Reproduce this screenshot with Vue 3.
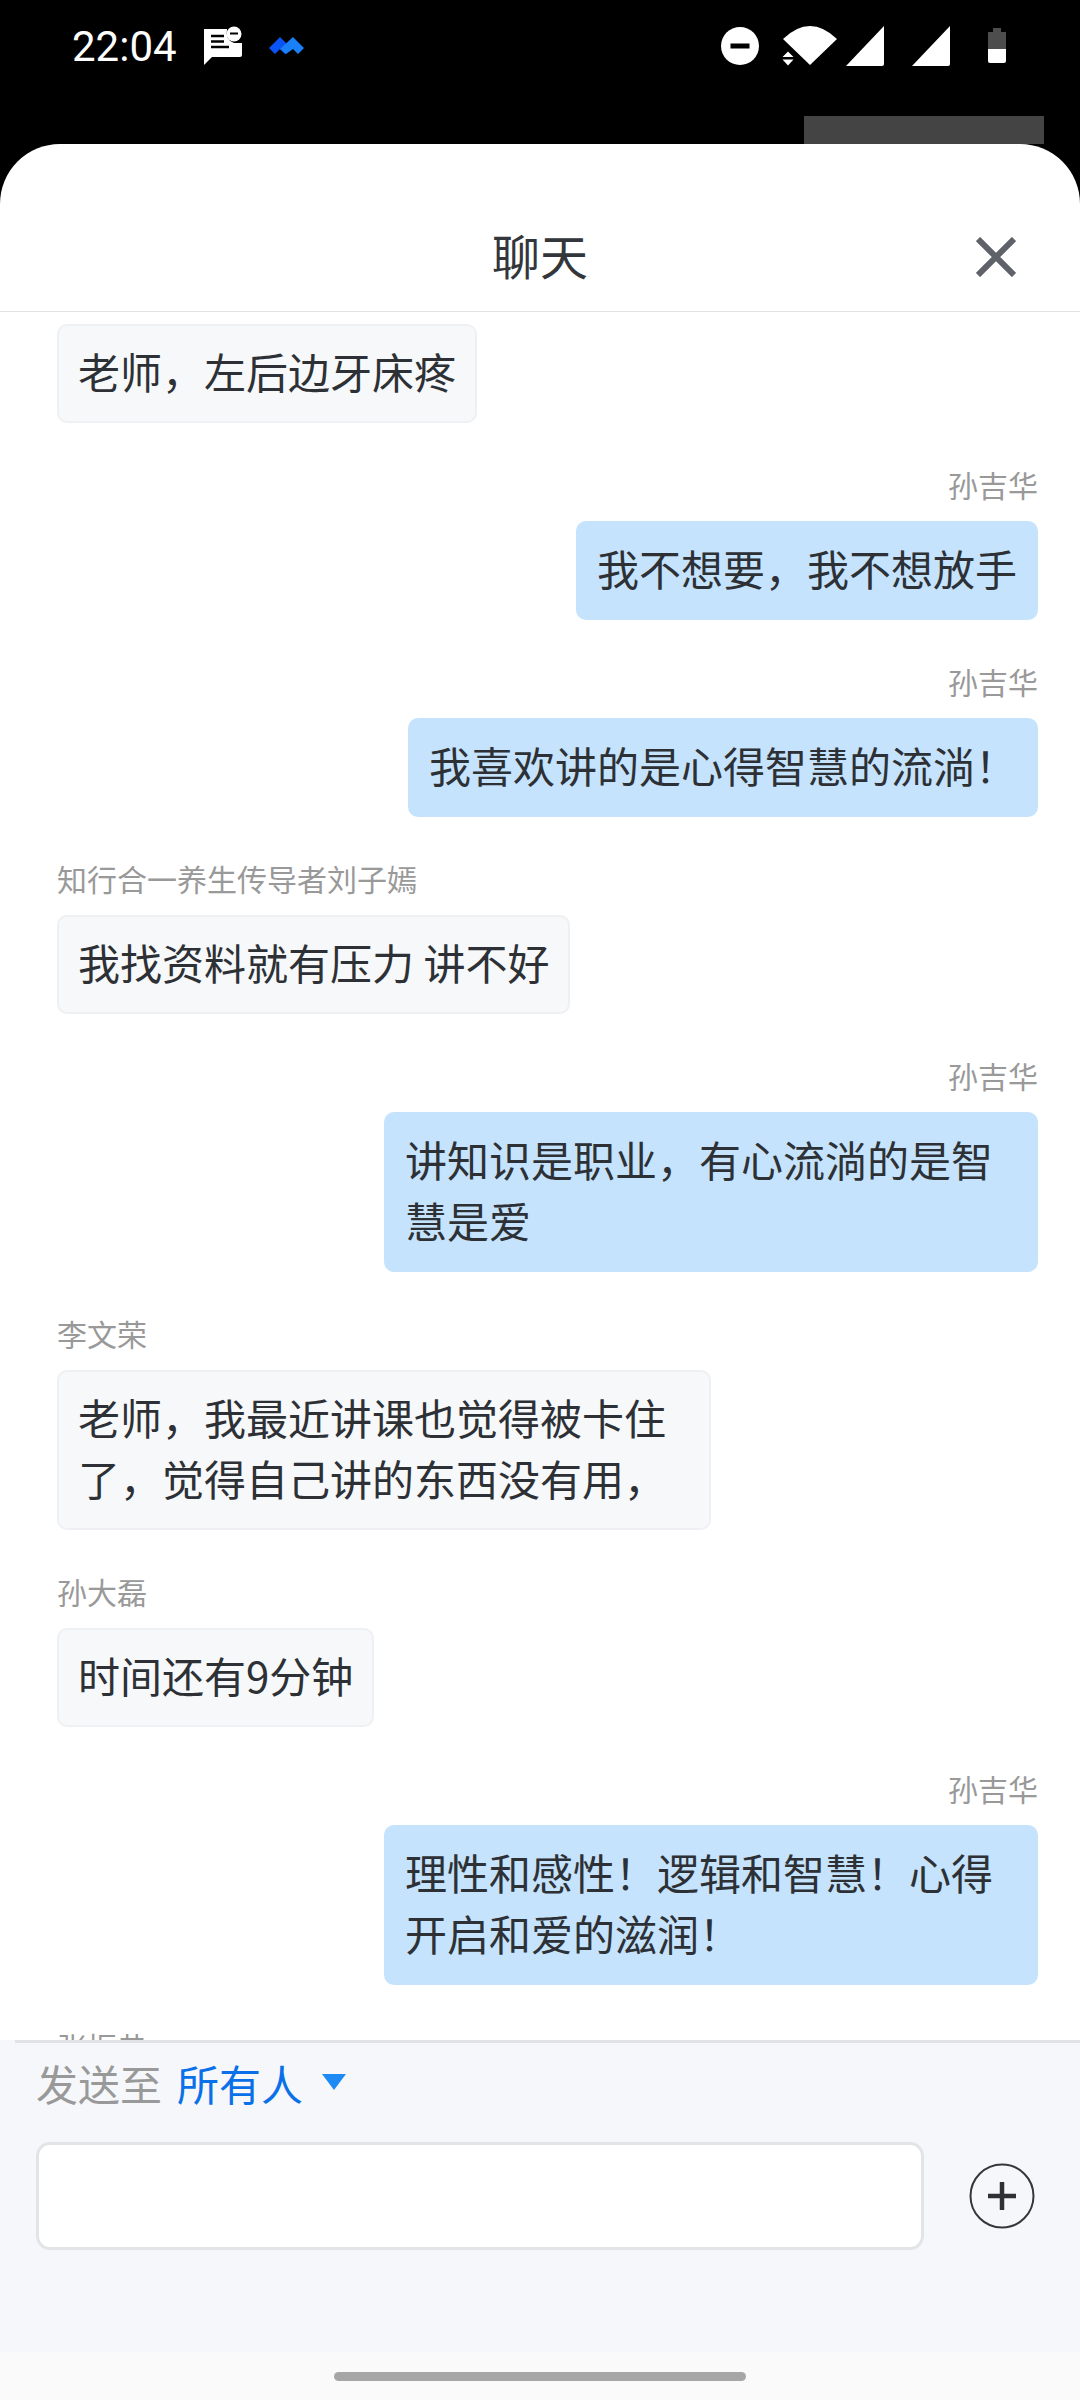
<script setup>
const messages = [
  { id: 1, side: 'left', text: '老师，左后边牙床疼' },
  { id: 2, side: 'right', name: '孙吉华', text: '我不想要，我不想放手' },
  { id: 3, side: 'right', name: '孙吉华', text: '我喜欢讲的是心得智慧的流淌！' },
  { id: 4, side: 'left', name: '知行合一养生传导者刘子嫣', text: '我找资料就有压力 讲不好' },
  { id: 5, side: 'right', name: '孙吉华', text: '讲知识是职业，有心流淌的是智慧是爱' },
  { id: 6, side: 'left', name: '李文荣', text: '老师，我最近讲课也觉得被卡住了，觉得自己讲的东西没有用，' },
  { id: 7, side: 'left', name: '孙大磊', text: '时间还有9分钟' },
  { id: 8, side: 'right', name: '孙吉华', text: '理性和感性！逻辑和智慧！心得开启和爱的滋润！' },
  { id: 9, side: 'left', name: '张振恭', text: '' }
]
</script>

<template>
  <div class="screen">
    <div class="status">
      <div class="status-left">
        <span class="time">22:04</span>
        <svg class="ic-msg" width="40" height="40" viewBox="0 0 40 40">
          <path fill="#fff" d="M1 3H24Q22 14 31 17H39V29Q39 31 37 31H9L1 39Z" />
          <path stroke="#000" stroke-width="2.400" d="M8 10H21M8 15.500H21M8 21H26" />
          <circle cx="31" cy="8" r="7.500" fill="#fff" />
          <path stroke="#000" stroke-width="2" d="M27 7.500H35" />
        </svg>
        <svg class="ic-app" width="35" height="18" viewBox="0 0 35 18">
          <path fill="#0a54f5" d="M0 11L11 0L22 11L16 17L11 12L6 17Z" />
          <path fill="#1a80f8" d="M11 12L24 0L35 11L29 17L24 12L17 17Z" />
        </svg>
      </div>
      <div class="status-right">
        <svg width="38" height="38" viewBox="0 0 38 38"><circle cx="19" cy="19" r="19" fill="#fff" /><rect x="9.500" y="16.500" width="19" height="5" fill="#000" /></svg>
        <svg class="ic-wifi" width="55" height="40" viewBox="0 0 55 40">
          <path fill="#fff" d="M1 13Q28 -13 55 13L28 39Z" />
          <path fill="#fff" d="M0.500 31L6 25.500L11.500 31ZM0.500 33.500H11.500L6 39.500Z" />
        </svg>
        <svg class="ic-sig" width="40" height="41" viewBox="0 0 40 41"><path fill="#fff" d="M39 0V38Q39 40 37 40H1Z" /></svg>
        <svg class="ic-sig2" width="40" height="41" viewBox="0 0 40 41"><path fill="#fff" d="M39 0V38Q39 40 37 40H1Z" /></svg>
        <svg class="ic-bat" width="20" height="36" viewBox="0 0 20 36">
          <path fill="#4d4d4d" d="M6 0H14V4H19V21H1V4H6Z" />
          <path fill="#fff" d="M1 21H19V33Q19 35 17 35H3Q1 35 1 33Z" />
        </svg>
      </div>
    </div>
    <div class="behind-row"><div class="behind"></div></div>

    <div class="sheet">
      <header class="head">
        <span class="title">聊天</span>
        <svg class="close" width="40" height="40" viewBox="0 0 40 40"><path d="M2 2L38 38M38 2L2 38" stroke="#5f6269" stroke-width="6" /></svg>
      </header>

      <div class="list">
        <div v-for="m in messages" :key="m.id" class="msg" :class="m.side">
          <div v-if="m.name" class="name">{{ m.name }}</div>
          <div v-if="m.text" class="bubble">{{ m.text }}</div>
        </div>
      </div>

      <footer class="composer">
        <div class="to">
          <span class="to-label">发送至</span>
          <span class="to-value">所有人</span>
          <span class="caret"></span>
        </div>
        <div class="input-row">
          <div class="input"></div>
          <svg class="plus" width="66" height="66" viewBox="0 0 66 66">
            <circle cx="33" cy="33" r="31.500" fill="none" stroke="#33363b" stroke-width="2" />
            <path d="M19 33H47M33 19V47" stroke="#2d3034" stroke-width="4.500" />
          </svg>
        </div>
      </footer>
      <div class="navbar"><span class="pill"></span></div>
    </div>
  </div>
</template>

<style>
html, body { margin: 0; background: #000; }
</style>

<style scoped>
.screen {
  width: 1080px;
  height: 2400px;
  background: #000;
  display: flex;
  flex-direction: column;
  overflow: hidden;
  font-family: "Noto Sans CJK SC", "Noto Sans", sans-serif;
}
.status {
  height: 92px;
  flex: none;
  padding: 0 73px 0 72px;
  display: flex;
  align-items: center;
  justify-content: space-between;
  box-sizing: border-box;
}
.status-left, .status-right { display: flex; align-items: center; }
.time { font-family: Roboto, sans-serif; font-size: 42px; color: #fff; }
.ic-msg { margin-left: 26px; }
.ic-app { margin-left: 26px; }
.ic-wifi { margin-left: 23px; }
.ic-sig { margin-left: 8px; }
.ic-sig2 { margin-left: 26px; }
.ic-bat { margin-left: 36px; }
.behind-row { height: 52px; flex: none; display: flex; justify-content: flex-end; padding-right: 36px; align-items: flex-end; }
.behind { width: 240px; height: 28px; background: #444; }
.sheet {
  flex: 1;
  min-height: 0;
  background: #fff;
  border-radius: 60px 60px 0 0;
  display: flex;
  flex-direction: column;
  overflow: hidden;
}
.head {
  height: 168px;
  flex: none;
  box-sizing: border-box;
  border-bottom: 1px solid #e2e2e2;
  position: relative;
  display: flex;
  align-items: center;
  justify-content: center;
  padding-top: 52px;
}
.title { font-size: 48px; color: #33363b; }
.close { position: absolute; right: 64px; top: 93px; }
.list {
  flex: 1;
  min-height: 0;
  overflow: hidden;
  padding: 12px 42px 0 57px;
  display: flex;
  flex-direction: column;
  gap: 41px;
}
.msg { display: flex; flex-direction: column; flex: none; }
.msg.right { align-items: flex-end; }
.msg.left { align-items: flex-start; }
.name { font-size: 30px; line-height: 40px; color: #999; margin-bottom: 17px; }
.bubble {
  box-sizing: border-box;
  font-size: 42px;
  line-height: 61px;
  color: #2d3136;
  padding: 14px 19px 20px;
  border-radius: 10px;
  border: 2px solid #c5e3fc;
  max-width: 654px;
}
.left .bubble { background: #f7f8fa; border-color: #eff0f3; }
.right .bubble { background: #c5e3fc; }
.composer {
  height: 312px;
  flex: none;
  box-sizing: border-box;
  background: #f5f7fb;
  position: relative;
  padding: 3px 36px 0;
}
.composer::before {
  content: "";
  position: absolute;
  left: 15px; right: 0; top: 0;
  height: 3px;
  background: #e0e2e7;
}
.to { display: flex; align-items: center; height: 78px; font-size: 42px; }
.to-label { color: #999; }
.to-value { color: #0a70e8; margin-left: 15px; }
.caret {
  width: 0; height: 0;
  margin-left: 19px;
  border-left: 12px solid transparent;
  border-right: 12px solid transparent;
  border-top: 16px solid #1e8bf5;
}
.input-row { display: flex; align-items: center; margin-top: 21px; }
.input {
  width: 888px;
  height: 108px;
  box-sizing: border-box;
  background: #fff;
  border: 3px solid #e2e4e8;
  border-radius: 14px;
}
.plus { margin-left: 45px; }
.navbar {
  height: 48px;
  flex: none;
  background: #fafafa;
  display: flex;
  align-items: center;
  justify-content: center;
}
.pill { width: 412px; height: 9px; border-radius: 5px; background: #a6a6a6; }
</style>
